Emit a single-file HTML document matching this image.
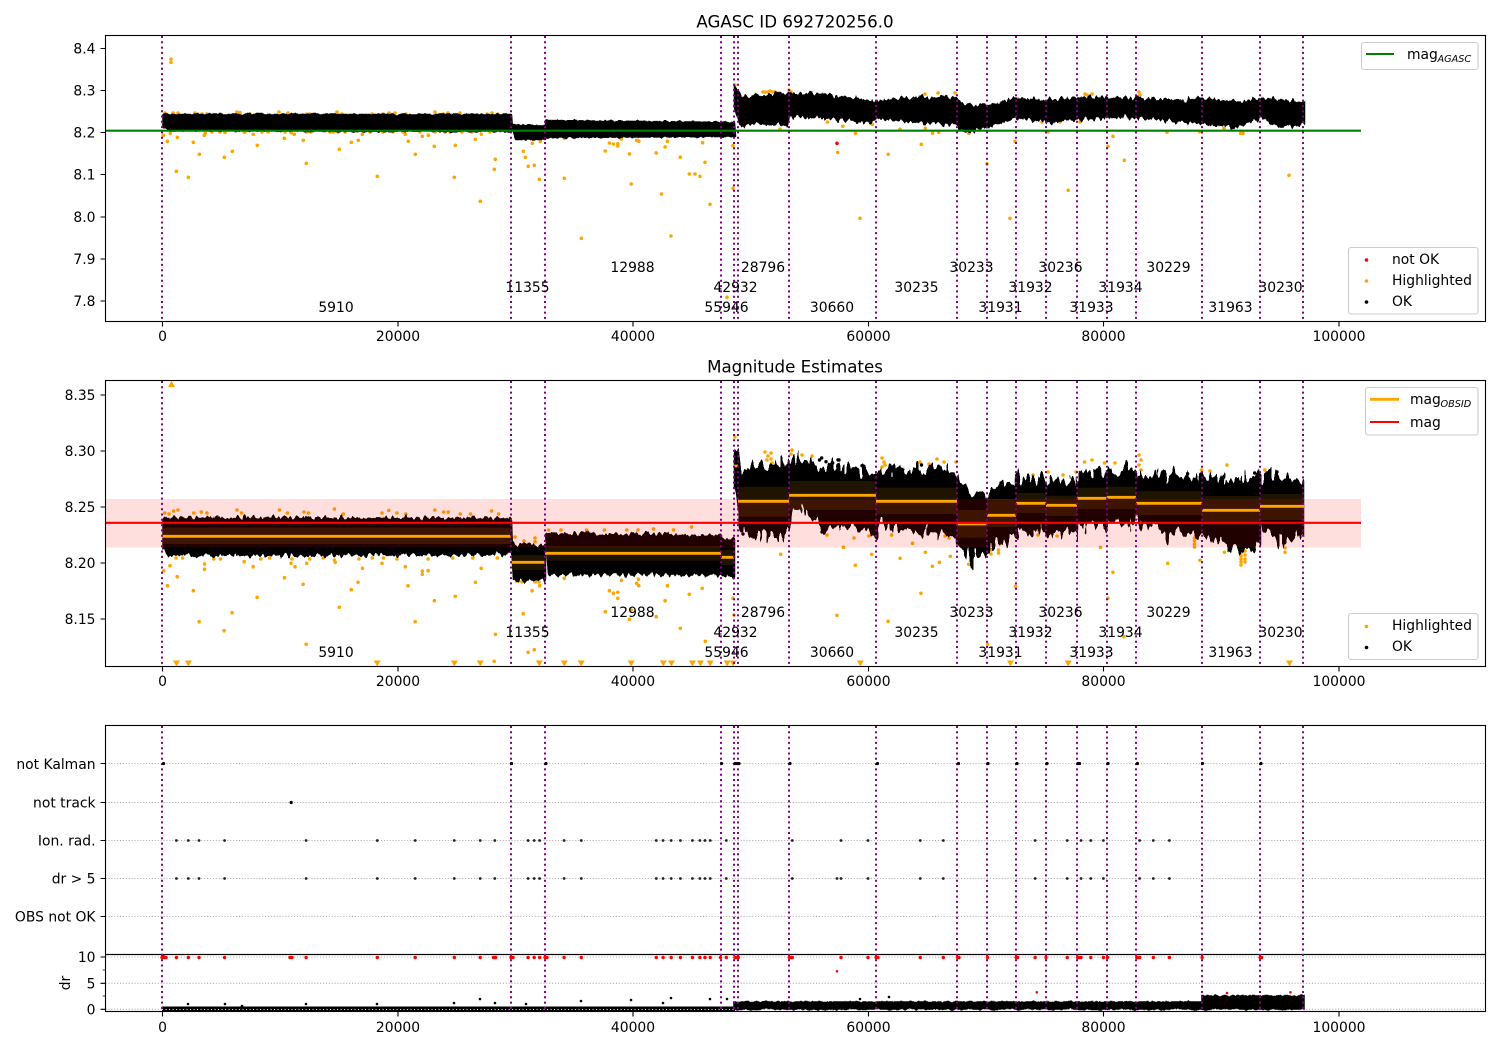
<!DOCTYPE html>
<html><head><meta charset="utf-8"><title>AGASC ID 692720256.0</title>
<style>html,body{margin:0;padding:0;background:#fff}svg{display:block}text{font-family:"DejaVu Sans","Liberation Sans",sans-serif;font-size:13.89px;fill:#000}</style></head>
<body>
<svg xmlns="http://www.w3.org/2000/svg" width="1500" height="1050" viewBox="0 0 1500 1050">
<defs>
<filter id="j0" filterUnits="userSpaceOnUse" x="0" y="0" width="1500" height="1050" color-interpolation-filters="sRGB"><feTurbulence type="fractalNoise" baseFrequency="0.22 0.05" numOctaves="2" seed="4"/><feColorMatrix values="0 0 0 0 .5 0 1 0 0 0 0 0 1 0 0 0 0 0 0 1" result="n"/><feDisplacementMap in="SourceGraphic" in2="n" scale="3.5" xChannelSelector="R" yChannelSelector="G"/></filter>
<filter id="j1" filterUnits="userSpaceOnUse" x="0" y="0" width="1500" height="1050" color-interpolation-filters="sRGB"><feTurbulence type="fractalNoise" baseFrequency="0.25 0.05" numOctaves="2" seed="4"/><feColorMatrix values="0 0 0 0 .5 0 1 0 0 0 0 0 1 0 0 0 0 0 0 1" result="n"/><feDisplacementMap in="SourceGraphic" in2="n" scale="11" xChannelSelector="R" yChannelSelector="G"/></filter>
<filter id="j2" filterUnits="userSpaceOnUse" x="0" y="0" width="1500" height="1050" color-interpolation-filters="sRGB"><feTurbulence type="fractalNoise" baseFrequency="0.25 0.05" numOctaves="2" seed="9"/><feColorMatrix values="0 0 0 0 .5 0 1 0 0 0 0 0 1 0 0 0 0 0 0 1" result="n"/><feDisplacementMap in="SourceGraphic" in2="n" scale="10" xChannelSelector="R" yChannelSelector="G"/></filter>
<filter id="j3" filterUnits="userSpaceOnUse" x="0" y="0" width="1500" height="1050" color-interpolation-filters="sRGB"><feTurbulence type="fractalNoise" baseFrequency="0.2 0.05" numOctaves="2" seed="17"/><feColorMatrix values="0 0 0 0 .5 0 1 0 0 0 0 0 1 0 0 0 0 0 0 1" result="n"/><feDisplacementMap in="SourceGraphic" in2="n" scale="34" xChannelSelector="R" yChannelSelector="G"/></filter>
</defs>
<rect width="1500" height="1050" fill="#fff"/>

<!-- AXES 1 -->
<path fill="none" stroke="#ffa500" stroke-width="3.6" stroke-linecap="round" d="M171 59h0M171 62.3h0M163.3 135.3h0M167.3 141.3h0M170.3 133.3h0M177.3 137.3h0M176.3 171.3h0M188.3 177.3h0M193.3 142.3h0M199.3 154.3h0M204.3 135.3h0M205.3 133.3h0M224.3 157.3h0M232.3 151.3h0M244.3 132.3h0M253.3 134.3h0M257.3 145.3h0M284.3 138.3h0M291.3 132.7h0M294.3 134.3h0M303.3 140.3h0M306.3 163.3h0M339.3 149.3h0M351.3 142.3h0M358.3 140.3h0M362.3 134.3h0M377.3 176.3h0M405.3 134.3h0M408.3 141.3h0M415.3 154.3h0M422.3 136.3h0M428.3 135.3h0M434.3 146.3h0M455.3 145.3h0M454.3 177.3h0M475.3 139.3h0M481.3 134.3h0M495.3 159.3h0M494.3 169.3h0M480.3 201.3h0M523.3 151.3h0M525.3 157.3h0M528.3 166.3h0M534.3 165.3h0M532.3 143.3h0M539.3 179.3h0M540.3 141.3h0M564.3 178.3h0M564.3 138.3h0M581.3 238.3h0
M605.3 151h0M609.4 143h0M613.4 144h0M617.8 143.7h0M617.8 146h0M621.4 139h0M629.4 153.9h0M631.2 184h0M636.6 140.3h0M638.8 141.2h0M656.2 152.9h0M661.5 194h0M665.1 146.9h0M667.4 141.2h0M671 236h0M680.3 157.2h0M689.3 174h0M695 174h0M702.6 142.7h0M705 162.3h0M700 176.3h0M710 204.3h0M733 145.7h0M733 188.3h0M727 297.3h0
M837.7 152.3h0M888.2 154.3h0M921.3 144.3h0M860 218.3h0M1010 218.3h0M987 163.7h0M1015 141.3h0M1068.2 190.3h0M1108 146.3h0M1113 136.3h0M1124.3 160.3h0M1289 175.3h0M827.5 122h0M842.8 126.3h0M855.5 133.3h0M872.4 124.3h0M900 129.3h0M925.4 128.3h0M932.6 133.3h0M938.7 132.3h0M780 129h0M1167 132.3h0M1199.8 131.7h0M1224 128.3h0M1240.6 133.3h0M1243 133.3h0M968.8 133.3h0
M165 113h0M173 113h0M178 113h0M195 113h0M202 114h0M207 114h0M237 112h0M240 112.5h0M250 114h0M279 112h0M288 113h0M307 114h0M310 114h0M337 112h0M342 114h0M372 114h0M383 114h0M389 113h0M395 113h0M406 114h0M435 112h0M443 114h0M448 113h0M460 113h0M487 114h0M492 113h0M498 114h0
M212 132h0M220 132h0M225 132.5h0M245 132h0M262 132h0M268 132h0M285 132h0M307 132h0M311 132h0M330 132h0M333 132h0M338 132h0M345 132h0M370 132h0M383 132h0M393 132h0M403 132h0M420 132h0M435 132h0M445 132h0M450 132h0M462 132h0M472 132h0M490 132h0
M735 85h0M763 92h0M765 92h0M768 92h0M770 91h0M773 92h0M775 92h0M780 93h0M789 90h0M791 92h0M955 93h0M925 94h0M938 93h0M1087 95h0M1092 94h0M1139 92h0M1140 95h0M1018 99h0M1050 100h0M1048 132h0M1042 122h0M1060 122h0M1080 122h0M1085 94h0"/>
<path fill="#000" stroke="#000" stroke-width="2.5" stroke-linejoin="round" filter="url(#j0)" d="M163.5 115L511 115L512 129L512 131L169 130L163.5 127Z
M512 125.5L545 126L545 139L516 139Z
M546 121L734 123L735 136L546 137Z"/>
<path fill="#000" stroke="#000" stroke-width="2.5" stroke-linejoin="round" filter="url(#j1)" d="M735 87L738 89L741 98L789 94L822 95L876 102L900 99L955 98L965 106L985 106L1016 99L1047 101L1082 98L1136 99L1184 101L1202 99L1240 103L1261 99L1304 103L1304 122L1281 126L1261 117L1235 127L1195 122L1136 117L1108 117L1077 119L1047 121L1016 117L985 128L965 131L955 124L905 121L876 117L873 122L820 117L790 116L787 124L740 124L735 105Z"/>
<path fill="none" stroke="#f00" stroke-width="3.6" stroke-linecap="round" d="M837 143.3h0"/>
<path stroke="#008000" stroke-width="2.1" d="M105.5 130.7H1361"/>
<rect x="105.5" y="35.5" width="1380" height="286" fill="none" stroke="#000" stroke-width="1.1"/>

<!-- AXES 2 -->
<path fill="none" stroke="#ffa500" stroke-width="3.6" stroke-linecap="round" d="M163.8 570.7h0M170 565.7h0M167.4 585.7h0M177.2 576.7h0M193.3 590.7h0M199.1 621.7h0M204.5 564h0M204.5 569.3h0M224.1 630.7h0M232.1 612.7h0M244.2 561.7h0M253.1 566.7h0M257.1 597.3h0M284.4 577.7h0M291 563.3h0M295 566.7h0M303.1 584.3h0M306.2 644.3h0M306.7 563.3h0M335.3 562.3h0M339.3 607.3h0M351.3 589.7h0M358 582.3h0M362.5 568.3h0M382 563.3h0M405.3 566.7h0M408 585.7h0M415.2 621.7h0M422.3 574.3h0M422.3 571h0M428.1 570.7h0M434.4 600.7h0M455.3 596.3h0M475.4 582.3h0M481.2 568.3h0M495.5 634.3h0M494.2 661.3h0M523.2 613.7h0M532.1 590.7h0M539.7 585.7h0M528.1 652.3h0M534.3 649.7h0M516.5 581h0M521.9 581.7h0M535.2 581.7h0M539 582h0
M564.3 578.3h0M605.3 611.7h0M609.4 590.7h0M613.4 593.3h0M617.8 592.3h0M617.8 598.3h0M621.4 580.3h0M629.4 619.3h0M631.2 610h0M636.6 583.3h0M638.8 585.7h0M638.4 579.3h0M656.2 616.7h0M665.1 600.7h0M667.4 585.7h0M680.3 628.3h0M689.3 594.3h0M702.2 588.3h0M705.3 641.3h0M733 598.3h0M734 615h0M780.7 554.3h0
M827 535h0M843.4 547.3h0M855.3 565.3h0M871.7 554.3h0M836.9 615.3h0M888.1 621.3h0M900.1 558.3h0M925.4 552.3h0M939.4 562.3h0M932.4 566.3h0M950.3 556.3h0M920.9 593.3h0M891.6 535h0M912.5 543.3h0M968.7 564.3h0M1015.5 586.3h0M987.6 644.3h0M1100.5 547.3h0M1112.9 572.3h0M1108 598.3h0M1123.9 636.7h0M1167.7 563.3h0M1200 560.3h0M1224.4 552.3h0M1285 552.3h0M1285 548h0
M1194.5 538h0M1194.5 541h0M1194.5 544h0M1194.5 547h0M1241 550h0M1241 553h0M1241 556h0M1241 559h0M1241 562h0M1241 565h0M1245 551h0M1245 555h0M1245 559h0M1245 562h0
M765 452h0M768 456h0M771 453h0M771 459h0M767 460h0M772 463h0M792 450h0M791 454h0M802 455h0M812 456h0M882 458h0M884 462h0M882 467h0M885 465h0M920 462h0M929 464h0M937 459h0M944 462h0M956 462h0M1084.6 462h0M1092 460h0M1104.5 463h0M1115 463h0M1139 455h0M1141 460h0M1139 465h0M1141 470h0M1227 465h0M1018 474h0M1033 475h0M1048 472h0M1063 475h0M1076 472h0M1201.5 470h0M1210 471h0M1264.7 470h0M735 437h0
M1038 535h0M1038 530h0M1057 536h0M991 550h0M991 554h0M998.5 550h0M998.5 553h0M854 538h0M869 536h0M875 535h0M949 538h0M945 536h0M1197 536h0
M164.7 513h0M169 514h0M173.7 511h0M178 510h0M193.7 513h0M201.3 512h0M207 513h0M237 510h0M241.5 513h0M279.5 510h0M287.5 513h0M304 512h0M308.5 513h0M334.4 509h0M343.3 514h0M382 513h0M388.8 510.5h0M396.9 513h0M405.8 514h0M434.8 510h0M443.7 512h0M448.2 512h0M460.2 514h0M470.5 514h0M491.5 511h0M498.6 514h0
M176 558h0M182.6 558h0M213.8 559h0M220.5 559h0M260.7 559h0M269.6 558h0M292 559h0M309.8 559h0M323.2 558h0M334.4 560h0M358.9 559h0M372.3 558h0M383.5 558h0M396.9 559h0M428.1 559h0M452.7 558h0M472.8 558h0M497.3 558h0
M515 537h0M524 541h0M535 538h0M535 541.7h0M548.6 530h0M561 530h0M586.6 530h0M604.4 530h0M626.8 530h0M638 530h0M653.5 529h0M673.6 530h0M691.5 527h0M720 535h0"/>
<path fill="#ffa500" d="M168 387L171.5 380.5L175 387ZM173 660.5h7l-3.5 6zM184.9 660.5h7l-3.5 6zM373.7 660.5h7l-3.5 6zM450.9 660.5h7l-3.5 6zM476.8 660.5h7l-3.5 6zM535.8 660.5h7l-3.5 6zM560.8 660.5h7l-3.5 6zM577.7 660.5h7l-3.5 6zM627.7 660.5h7l-3.5 6zM659.9 660.5h7l-3.5 6zM667.9 660.5h7l-3.5 6zM688.9 660.5h7l-3.5 6zM696.9 660.5h7l-3.5 6zM706.7 660.5h7l-3.5 6zM723.7 660.5h7l-3.5 6zM729.7 660.5h7l-3.5 6zM856.8 660.5h7l-3.5 6zM1007 660.5h7l-3.5 6zM1064.7 660.5h7l-3.5 6zM1286 660.5h7l-3.5 6z"/>
<path fill="#000" stroke="#000" stroke-width="2.5" stroke-linejoin="round" filter="url(#j2)" d="M163.5 518.5L511 519L512 554L169 555L163.5 547Z
M512 545L545 546L545 579L514 580Z
M546 534L721 536L721 574L549 574Z
M722 539L734 540L734 576L722 575Z"/>
<path fill="#000" stroke="#000" stroke-width="2.5" stroke-linejoin="round" filter="url(#j3)" d="M735 445L738 447L740 479L750 471L765 465L789 465L792 459L827 466L854 471L876 475L880 470L919 471L957 471L959 487L974 493L987 493L1016 484L1016 479L1046 479L1046 482L1077 482L1077 474L1107 474L1107 470L1136 470L1136 475L1175 476L1202 477L1202 474L1230 483L1260 477L1260 475L1285 479L1303 483L1303 534L1284 542L1260 521L1260 544L1241 549L1203 534L1202 532L1170 534L1136 521L1136 522L1107 522L1107 526L1077 526L1077 531L1046 531L1016 531L1016 532L987 550L969 558L957 544L957 537L941 531L919 531L880 521L875 534L850 529L822 527L810 513L792 504L789 537L770 534L750 537L740 524L735 485Z"/>
<path fill="none" stroke="#000" stroke-width="3.4" stroke-linecap="round" d="M821.7 458h0M826 461.7h0M832.7 463h0M838 460h0M862.7 466h0M743 534h0M754 537h0M822 532h0M835 519h0M819.5 460h0M839 460h0M862 465.7h0M1165 474h0M1187.6 473.7h0M1254.7 473h0M1277 472h0M1001 483h0M921.5 465h0"/>
<rect x="105.5" y="499" width="1255.5" height="48.5" fill="#f00" fill-opacity=".13"/>
<g fill="#ffa500" fill-opacity=".12">
<rect x="162" y="527.7" width="349" height="16.3"/><rect x="511" y="555" width="34" height="15"/><rect x="545" y="546" width="176" height="14.7"/><rect x="721" y="550" width="13" height="15"/><rect x="738" y="486.7" width="51" height="30"/><rect x="789" y="481" width="87" height="29"/><rect x="876" y="487.7" width="81" height="26.3"/><rect x="957" y="510" width="30" height="27.7"/><rect x="987" y="499" width="29" height="28"/><rect x="1016" y="493" width="30" height="20"/><rect x="1046" y="495.7" width="31" height="20.3"/><rect x="1077" y="487.7" width="30" height="21.3"/><rect x="1107" y="486.7" width="29" height="22.3"/><rect x="1136" y="491" width="66" height="24"/><rect x="1202" y="496" width="58" height="29"/><rect x="1260" y="494" width="44" height="26"/>
</g>
<path fill="none" stroke="#ffa500" stroke-width="2.8" d="M162 536.3H511M511 562.3H545M545 553.3H721M721 557.3H734M734 466H738M738 501.3H789M789 495.3H876M876 501.3H957M957 524H987M987 515.3H1016M1016 503.3H1046M1046 505.3H1077M1077 498.3H1107M1107 497.3H1136M1136 503.3H1202M1202 510.3H1260M1260 506.3H1304"/>
<path stroke="#f00" stroke-width="2.1" d="M105.5 522.8H1361"/>
<rect x="105.5" y="380.5" width="1380" height="286" fill="none" stroke="#000" stroke-width="1.1"/>

<!-- AXES 3 / 4 grid -->
<path fill="none" stroke="#b0b0b0" stroke-width="1.1" stroke-dasharray="1.1 1.8" d="M105.5 763.5H1485M105.5 802.5H1485M105.5 840.5H1485M105.5 878.5H1485M105.5 916.5H1485M105.5 957H1485M105.5 983.3H1485M105.5 1009.3H1485"/>
<path fill="#000" d="M162 1006.5H735V1011H162Z"/>
<path fill="#000" stroke="#000" stroke-width="1.5" filter="url(#j0)" d="M734 1002L1202 1002L1202 1009L734 1009Z"/>
<path fill="#000" stroke="#000" stroke-width="1.5" filter="url(#j0)" d="M1202 996L1304 996L1304 1009L1202 1009Z"/>
<path fill="none" stroke="#ddd" stroke-width="1.1" stroke-dasharray="1.1 2.4" d="M162 1009.5H735"/>
<path fill="none" stroke="#000" stroke-width="2.6" stroke-linecap="round" d="M188 1004h0M225 1004h0M306 1004h0M377 1004h0M454 1003h0M480 999h0M495 1003h0M526 1004h0M581 1001h0M242 1006h0M631 1000h0M671 998h0M710 999h0M727 999h0M663 1003h0M889 997h0M860 999h0"/>
<path fill="none" stroke="#f00" stroke-width="3.4" stroke-linecap="round" d="M162 957.5h0M163 955.5h0M164.5 957.5h0M166 957.5h0M176.4 957.5h0M188.3 957.5h0M199 957.5h0M224.6 957.5h0M290 957.5h0M292 957.5h0M306.1 957.5h0M377.3 957.5h0M415.2 957.5h0M454.3 957.5h0M480.2 957.5h0M493.5 957.5h0M495.5 957.5h0M511 957.5h0M513 957.5h0M528.1 957.5h0M534.2 957.5h0M539.6 957.5h0M545 957.5h0M547 957.5h0M564.1 957.5h0M581.3 957.5h0M656.3 957.5h0M663.1 957.5h0M671.2 957.5h0M680.4 957.5h0M692.4 957.5h0M699.9 957.5h0M705 957.5h0M710.2 957.5h0M720.5 957.5h0M726.3 957.5h0M734.9 957.5h0M736.5 957.5h0M738.3 957.5h0M789.4 957.5h0M791 957.5h0M792.3 957.5h0M841 957.5h0M868 957.5h0M876.1 957.5h0M878 957.5h0M920.3 957.5h0M943.3 957.5h0M957.6 957.5h0M959 957.5h0M987.5 957.5h0M1016.2 957.5h0M1017.5 957.5h0M1035.1 957.5h0M1046 957.5h0M1067.2 957.5h0M1077.6 957.5h0M1079 957.5h0M1081 957.5h0M1090.8 957.5h0M1103.4 957.5h0M1107.4 957.5h0M1136.7 957.5h0M1138 957.5h0M1139.6 957.5h0M1153.3 957.5h0M1169.4 957.5h0M1202.1 957.5h0M1260.1 957.5h0M1261.5 957.5h0"/>
<path fill="none" stroke="#f00" stroke-width="2.6" stroke-linecap="round" d="M837 971.3h0M1036.8 992.3h0M1290.5 992.3h0M1227 993h0"/>
<rect x="105.5" y="725.5" width="1380" height="229" fill="none" stroke="#000" stroke-width="1.1"/>
<rect x="105.5" y="954.5" width="1380" height="57" fill="none" stroke="#000" stroke-width="1.1"/>

<!-- vertical obsid lines -->
<g fill="none" stroke="#800080" stroke-width="2" stroke-dasharray="2 3.3">
<path d="M162 36V321M511 36V321M545 36V321M721 36V321M734 36V321M738 36V321M789 36V321M876 36V321M957 36V321M987 36V321M1016 36V321M1046 36V321M1077 36V321M1107 36V321M1136 36V321M1202 36V321M1260 36V321M1303 36V321"/>
<path d="M162 381V666M511 381V666M545 381V666M721 381V666M734 381V666M738 381V666M789 381V666M876 381V666M957 381V666M987 381V666M1016 381V666M1046 381V666M1077 381V666M1107 381V666M1136 381V666M1202 381V666M1260 381V666M1303 381V666"/>
<path d="M162 726V1011M511 726V1011M545 726V1011M721 726V1011M734 726V1011M738 726V1011M789 726V1011M876 726V1011M957 726V1011M987 726V1011M1016 726V1011M1046 726V1011M1077 726V1011M1107 726V1011M1136 726V1011M1202 726V1011M1260 726V1011M1303 726V1011"/>
</g>
<!-- flag dots, above the obsid lines -->
<path fill="none" stroke="#000" stroke-width="3.2" stroke-linecap="round" d="M163.5 763.5h0M511.5 763.5h0M546 763.5h0M721.5 763.5h0M735 763.5h0M737 763.5h0M739 763.5h0M790 763.5h0M877.5 763.5h0M958.5 763.5h0M988 763.5h0M1017 763.5h0M1047 763.5h0M1078 763.5h0M1079.5 763.5h0M1108 763.5h0M1137.5 763.5h0M1202.5 763.5h0M1261 763.5h0M291.2 802.5h0"/>
<path fill="none" stroke="#222" stroke-width="2.8" stroke-linecap="round" d="M176.4 840.5h0M188.3 840.5h0M199 840.5h0M224.6 840.5h0M306.1 840.5h0M377.3 840.5h0M415.2 840.5h0M454.3 840.5h0M480.2 840.5h0M494.8 840.5h0M528.1 840.5h0M534.2 840.5h0M539.6 840.5h0M564.1 840.5h0M581.3 840.5h0M656.3 840.5h0M663.1 840.5h0M671.2 840.5h0M680.4 840.5h0M692.4 840.5h0M699.9 840.5h0M705 840.5h0M710.2 840.5h0M726.3 840.5h0M792.3 840.5h0M841 840.5h0M868 840.5h0M920.3 840.5h0M943.3 840.5h0M1035.1 840.5h0M1067.2 840.5h0M1081 840.5h0M1090.8 840.5h0M1103.4 840.5h0M1139.6 840.5h0M1153.3 840.5h0M1169.4 840.5h0
M176.4 878.5h0M188.3 878.5h0M199 878.5h0M224.6 878.5h0M306.1 878.5h0M377.3 878.5h0M415.2 878.5h0M454.3 878.5h0M480.2 878.5h0M494.8 878.5h0M528.1 878.5h0M534.2 878.5h0M539.6 878.5h0M564.1 878.5h0M581.3 878.5h0M656.3 878.5h0M663.1 878.5h0M671.2 878.5h0M680.4 878.5h0M692.4 878.5h0M699.9 878.5h0M705 878.5h0M710.2 878.5h0M726.3 878.5h0M792.3 878.5h0M837 878.5h0M841 878.5h0M868 878.5h0M920.3 878.5h0M943.3 878.5h0M1035.1 878.5h0M1067.2 878.5h0M1081 878.5h0M1090.8 878.5h0M1103.4 878.5h0M1139.6 878.5h0M1153.3 878.5h0M1169.4 878.5h0"/>

<!-- ticks -->
<path stroke="#000" stroke-width="1.1" d="M162.5 321.5v5M398 321.5v5M633 321.5v5M868.5 321.5v5M1103.5 321.5v5M1339 321.5v5M162.5 666.5v5M398 666.5v5M633 666.5v5M868.5 666.5v5M1103.5 666.5v5M1339 666.5v5M162.5 1011.5v5M398 1011.5v5M633 1011.5v5M868.5 1011.5v5M1103.5 1011.5v5M1339 1011.5v5
M100.5 48.5h5M100.5 90.5h5M100.5 132.5h5M100.5 174.5h5M100.5 217h5M100.5 259h5M100.5 301h5
M100.5 395h5M100.5 451h5M100.5 507h5M100.5 563h5M100.5 619h5
M100.5 763.5h5M100.5 802.5h5M100.5 840.5h5M100.5 878.5h5M100.5 916.5h5M100.5 957h5M100.5 983.3h5M100.5 1009.3h5"/>
<path stroke="#000" stroke-width=".8" d="M102.7 970h2.8M102.7 996h2.8"/>

<!-- tick labels -->
<g text-anchor="middle">
<text x="162.5" y="341">0</text><text x="398" y="341">20000</text><text x="633" y="341">40000</text><text x="868.5" y="341">60000</text><text x="1103.5" y="341">80000</text><text x="1339" y="341">100000</text>
<text x="162.5" y="686">0</text><text x="398" y="686">20000</text><text x="633" y="686">40000</text><text x="868.5" y="686">60000</text><text x="1103.5" y="686">80000</text><text x="1339" y="686">100000</text>
<text x="162.5" y="1032">0</text><text x="398" y="1032">20000</text><text x="633" y="1032">40000</text><text x="868.5" y="1032">60000</text><text x="1103.5" y="1032">80000</text><text x="1339" y="1032">100000</text>
</g>
<g text-anchor="end">
<text x="95.5" y="53.5">8.4</text><text x="95.5" y="95.5">8.3</text><text x="95.5" y="137.5">8.2</text><text x="95.5" y="179.5">8.1</text><text x="95.5" y="222">8.0</text><text x="95.5" y="264">7.9</text><text x="95.5" y="306">7.8</text>
<text x="95.5" y="400">8.35</text><text x="95.5" y="456">8.30</text><text x="95.5" y="512">8.25</text><text x="95.5" y="568">8.20</text><text x="95.5" y="624">8.15</text>
<text x="95.5" y="769">not Kalman</text><text x="95.5" y="807.5">not track</text><text x="95.5" y="845.5">Ion. rad.</text><text x="95.5" y="883.5">dr &gt; 5</text><text x="95.5" y="921.5">OBS not OK</text>
<text x="95.5" y="962">10</text><text x="95.5" y="988.3">5</text><text x="95.5" y="1014.3">0</text>
</g>
<text x="70" y="983" text-anchor="middle" transform="rotate(-90 70 983)">dr</text>

<!-- titles -->
<text x="795" y="27.5" text-anchor="middle" style="font-size:16.67px">AGASC ID 692720256.0</text>
<text x="795" y="372.5" text-anchor="middle" style="font-size:16.67px">Magnitude Estimates</text>

<!-- obsid labels -->
<g text-anchor="middle">
<text x="336" y="312">5910</text><text x="527.5" y="292">11355</text><text x="632.5" y="272">12988</text><text x="735.5" y="292">42932</text><text x="726.5" y="312">55946</text><text x="763" y="272">28796</text><text x="832" y="312">30660</text><text x="916.5" y="292">30235</text><text x="971.5" y="272">30233</text><text x="1000.5" y="312">31931</text><text x="1030.5" y="292">31932</text><text x="1060.5" y="272">30236</text><text x="1091.5" y="312">31933</text><text x="1120.5" y="292">31934</text><text x="1168.5" y="272">30229</text><text x="1230.5" y="312">31963</text><text x="1280.5" y="292">30230</text>
<text x="336" y="657">5910</text><text x="527.5" y="637">11355</text><text x="632.5" y="617">12988</text><text x="735.5" y="637">42932</text><text x="726.5" y="657">55946</text><text x="763" y="617">28796</text><text x="832" y="657">30660</text><text x="916.5" y="637">30235</text><text x="971.5" y="617">30233</text><text x="1000.5" y="657">31931</text><text x="1030.5" y="637">31932</text><text x="1060.5" y="617">30236</text><text x="1091.5" y="657">31933</text><text x="1120.5" y="637">31934</text><text x="1168.5" y="617">30229</text><text x="1230.5" y="657">31963</text><text x="1280.5" y="637">30230</text>
</g>

<!-- legends -->
<g fill="#fff" fill-opacity=".8" stroke="#ccc" stroke-width="1.1">
<rect x="1361.5" y="42.5" width="116.5" height="27" rx="2.5"/>
<rect x="1348.5" y="247.5" width="129.5" height="66.5" rx="2.5"/>
<rect x="1365.5" y="387.5" width="112.5" height="47.5" rx="2.5"/>
<rect x="1348.5" y="613.5" width="129.5" height="46" rx="2.5"/>
</g>
<path stroke="#008000" stroke-width="2.1" d="M1366 54H1394"/>
<path stroke="#ffa500" stroke-width="2.8" d="M1370 399.3H1399"/>
<path stroke="#f00" stroke-width="2.1" d="M1370 422H1399"/>
<path fill="none" stroke="#f00" stroke-width="3.6" stroke-linecap="round" d="M1366.5 260h0"/>
<path fill="none" stroke="#ffa500" stroke-width="3.6" stroke-linecap="round" d="M1366.5 281h0M1366.5 626.5h0"/>
<path fill="none" stroke="#000" stroke-width="3.6" stroke-linecap="round" d="M1366.5 302h0M1366.5 647.5h0"/>
<text x="1407" y="59">mag</text><text x="1437.5" y="62" style="font-size:9.7px;font-style:italic">AGASC</text>
<text x="1392" y="264">not OK</text><text x="1392" y="285">Highlighted</text><text x="1392" y="306">OK</text>
<text x="1410" y="404">mag</text><text x="1440.5" y="407" style="font-size:9.7px;font-style:italic">OBSID</text>
<text x="1410" y="427">mag</text>
<text x="1392" y="630">Highlighted</text><text x="1392" y="651">OK</text>
</svg>
</body></html>
